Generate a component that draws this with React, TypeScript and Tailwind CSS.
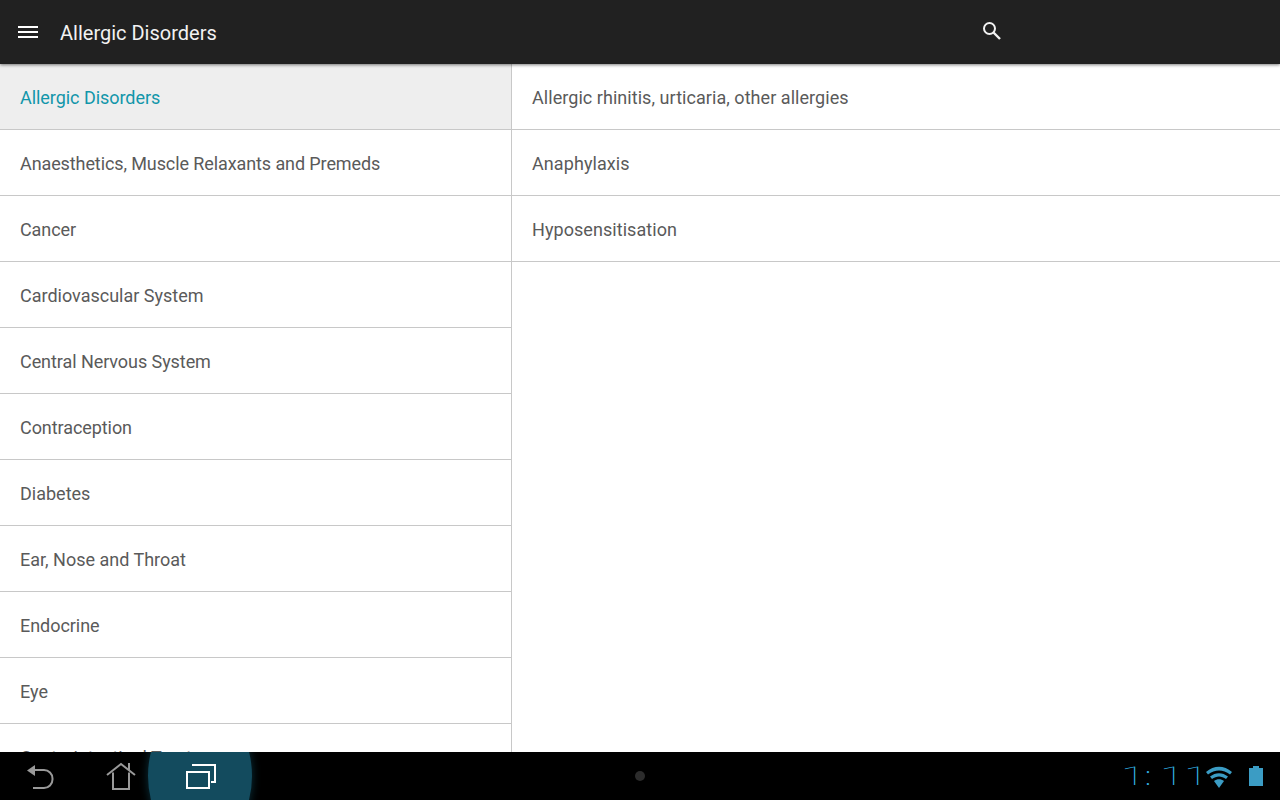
const left: [string, string][] = [
  ["Allergic Disorders", "tracking-[-0.05px]"],
  ["Anaesthetics, Muscle Relaxants and Premeds", "tracking-[-0.1px]"],
  ["Cancer", "tracking-[-0.1px]"],
  ["Cardiovascular System", ""],
  ["Central Nervous System", "tracking-[-0.07px]"],
  ["Contraception", "tracking-[-0.07px]"],
  ["Diabetes", ""],
  ["Ear, Nose and Throat", ""],
  ["Endocrine", "tracking-[-0.05px]"],
  ["Eye", ""],
  ["Gastrointestinal Tract", ""],
];
const right: [string, string][] = [
  ["Allergic rhinitis, urticaria, other allergies", "tracking-[0.05px]"],
  ["Anaphylaxis", "tracking-[0.08px]"],
  ["Hyposensitisation", "tracking-[0.06px]"],
];

function Row({ label, track, active }: { label: string; track: string; active?: boolean }) {
  return (
    <div className={`h-[66px] shrink-0 flex items-center pl-5 pt-[2px] border-b border-[#c8c8c8] text-[18px] ${track} ${active ? "bg-[#eeeeee] text-[#1296aa]" : "text-[#5a5a5a]"}`}>
      {label}
    </div>
  );
}

export default function App() {
  return (
    <div className="relative w-[1280px] h-[800px] flex flex-col overflow-hidden bg-white font-['Roboto',sans-serif]">
      <header className="relative z-10 h-[64px] shrink-0 bg-[#212121] flex items-center shadow-[0_1px_3px_rgba(0,0,0,0.5)]">
        <div className="ml-[18px] w-5 flex flex-col gap-[3px]">
          <div className="h-[2px] bg-white" />
          <div className="h-[2px] bg-white" />
          <div className="h-[2px] bg-white" />
        </div>
        <div className="ml-[22px] mt-[2px] text-[20px] text-[#f2f2f2] leading-none">Allergic Disorders</div>
        <svg className="ml-auto mr-[278px] mb-[2px]" width="22" height="22" viewBox="0 0 22 22" fill="none" stroke="#f2f2f2" strokeWidth="2">
          <circle cx="9.500" cy="8.500" r="5.500" />
          <path d="M13.500 12.500l6.500 6.500" strokeWidth="2.400" />
        </svg>
      </header>
      <main className="flex-1 min-h-0 flex overflow-hidden">
        <div className="w-[512px] shrink-0 border-r border-[#c8c8c8] flex flex-col">
          {left.map(([l, t], i) => <Row key={l} label={l} track={t} active={i === 0} />)}
        </div>
        <div className="flex-1 flex flex-col">
          {right.map(([l, t]) => <Row key={l} label={l} track={t} />)}
        </div>
      </main>
      <footer className="relative h-[48px] shrink-0 bg-black overflow-hidden">
        <div className="absolute left-[148px] top-[-48px] w-[104px] h-[144px] rounded-[50%] bg-[#134b5e] shadow-[0_0_10px_rgba(20,90,110,0.55)]" />
        <svg className="absolute left-[24px] top-[10px]" width="34" height="30" viewBox="0 0 34 30" fill="none" stroke="#999999" strokeWidth="2">
          <path d="M9 8h11a8.500 8.500 0 0 1 8.500 8.500v1A8.500 8.500 0 0 1 20 26h-11" />
          <path d="M3 8.500L11 3v11z" fill="#999999" stroke="none" />
        </svg>
        <svg className="absolute left-[104px] top-[10px]" width="34" height="30" viewBox="0 0 34 30" fill="none" stroke="#999999" strokeWidth="2">
          <path d="M3 13L17 2l14 11" />
          <path d="M9 10.500V27h16V10.500" />
          <path d="M25 1v7" />
        </svg>
        <svg className="absolute left-[184px] top-[10px]" width="34" height="30" viewBox="0 0 34 30" fill="none" stroke="#ffffff" strokeWidth="2">
          <rect x="3" y="10" width="22" height="16" />
          <path d="M8 3h23v17h-4" />
        </svg>
        <div className="absolute left-[635px] top-[19px] w-[10px] h-[10px] rounded-full bg-[#2c2c2c]" />
        <div className="absolute left-[1125px] top-[8px] flex items-center text-[26px] font-thin leading-[32px] text-[#33b5e5]">
          <span className="ml-[6px] inline-block origin-right scale-x-[1.7]">1</span>
          <span className="ml-0 mr-[19px] inline-block font-light">:</span>
          <span className="inline-block origin-right scale-x-[1.7]">1</span>
          <span className="ml-[10px] inline-block origin-right scale-x-[1.7]">1</span>
        </div>
        <svg className="absolute left-[1205px] top-[14px]" width="28" height="24" viewBox="0 0 28 24" fill="#3b9cc4">
          <path d="M1 6C9-1 19-1 27 6l-2 2.500C18 3 10 3 3 8.500z" />
          <path d="M5 10.500c5.500-4.500 12.500-4.500 18 0l-2 2.500c-4.500-3.500-9.500-3.500-14 0z" />
          <path d="M9 15c3-2.500 7-2.500 10 0l-5 7z" />
        </svg>
        <svg className="absolute left-[1248px] top-[13px]" width="16" height="22" viewBox="0 0 16 22" fill="#3b9cc4">
          <path d="M5 1h6v2h4v18H1V3h4z" />
        </svg>
      </footer>
    </div>
  );
}
